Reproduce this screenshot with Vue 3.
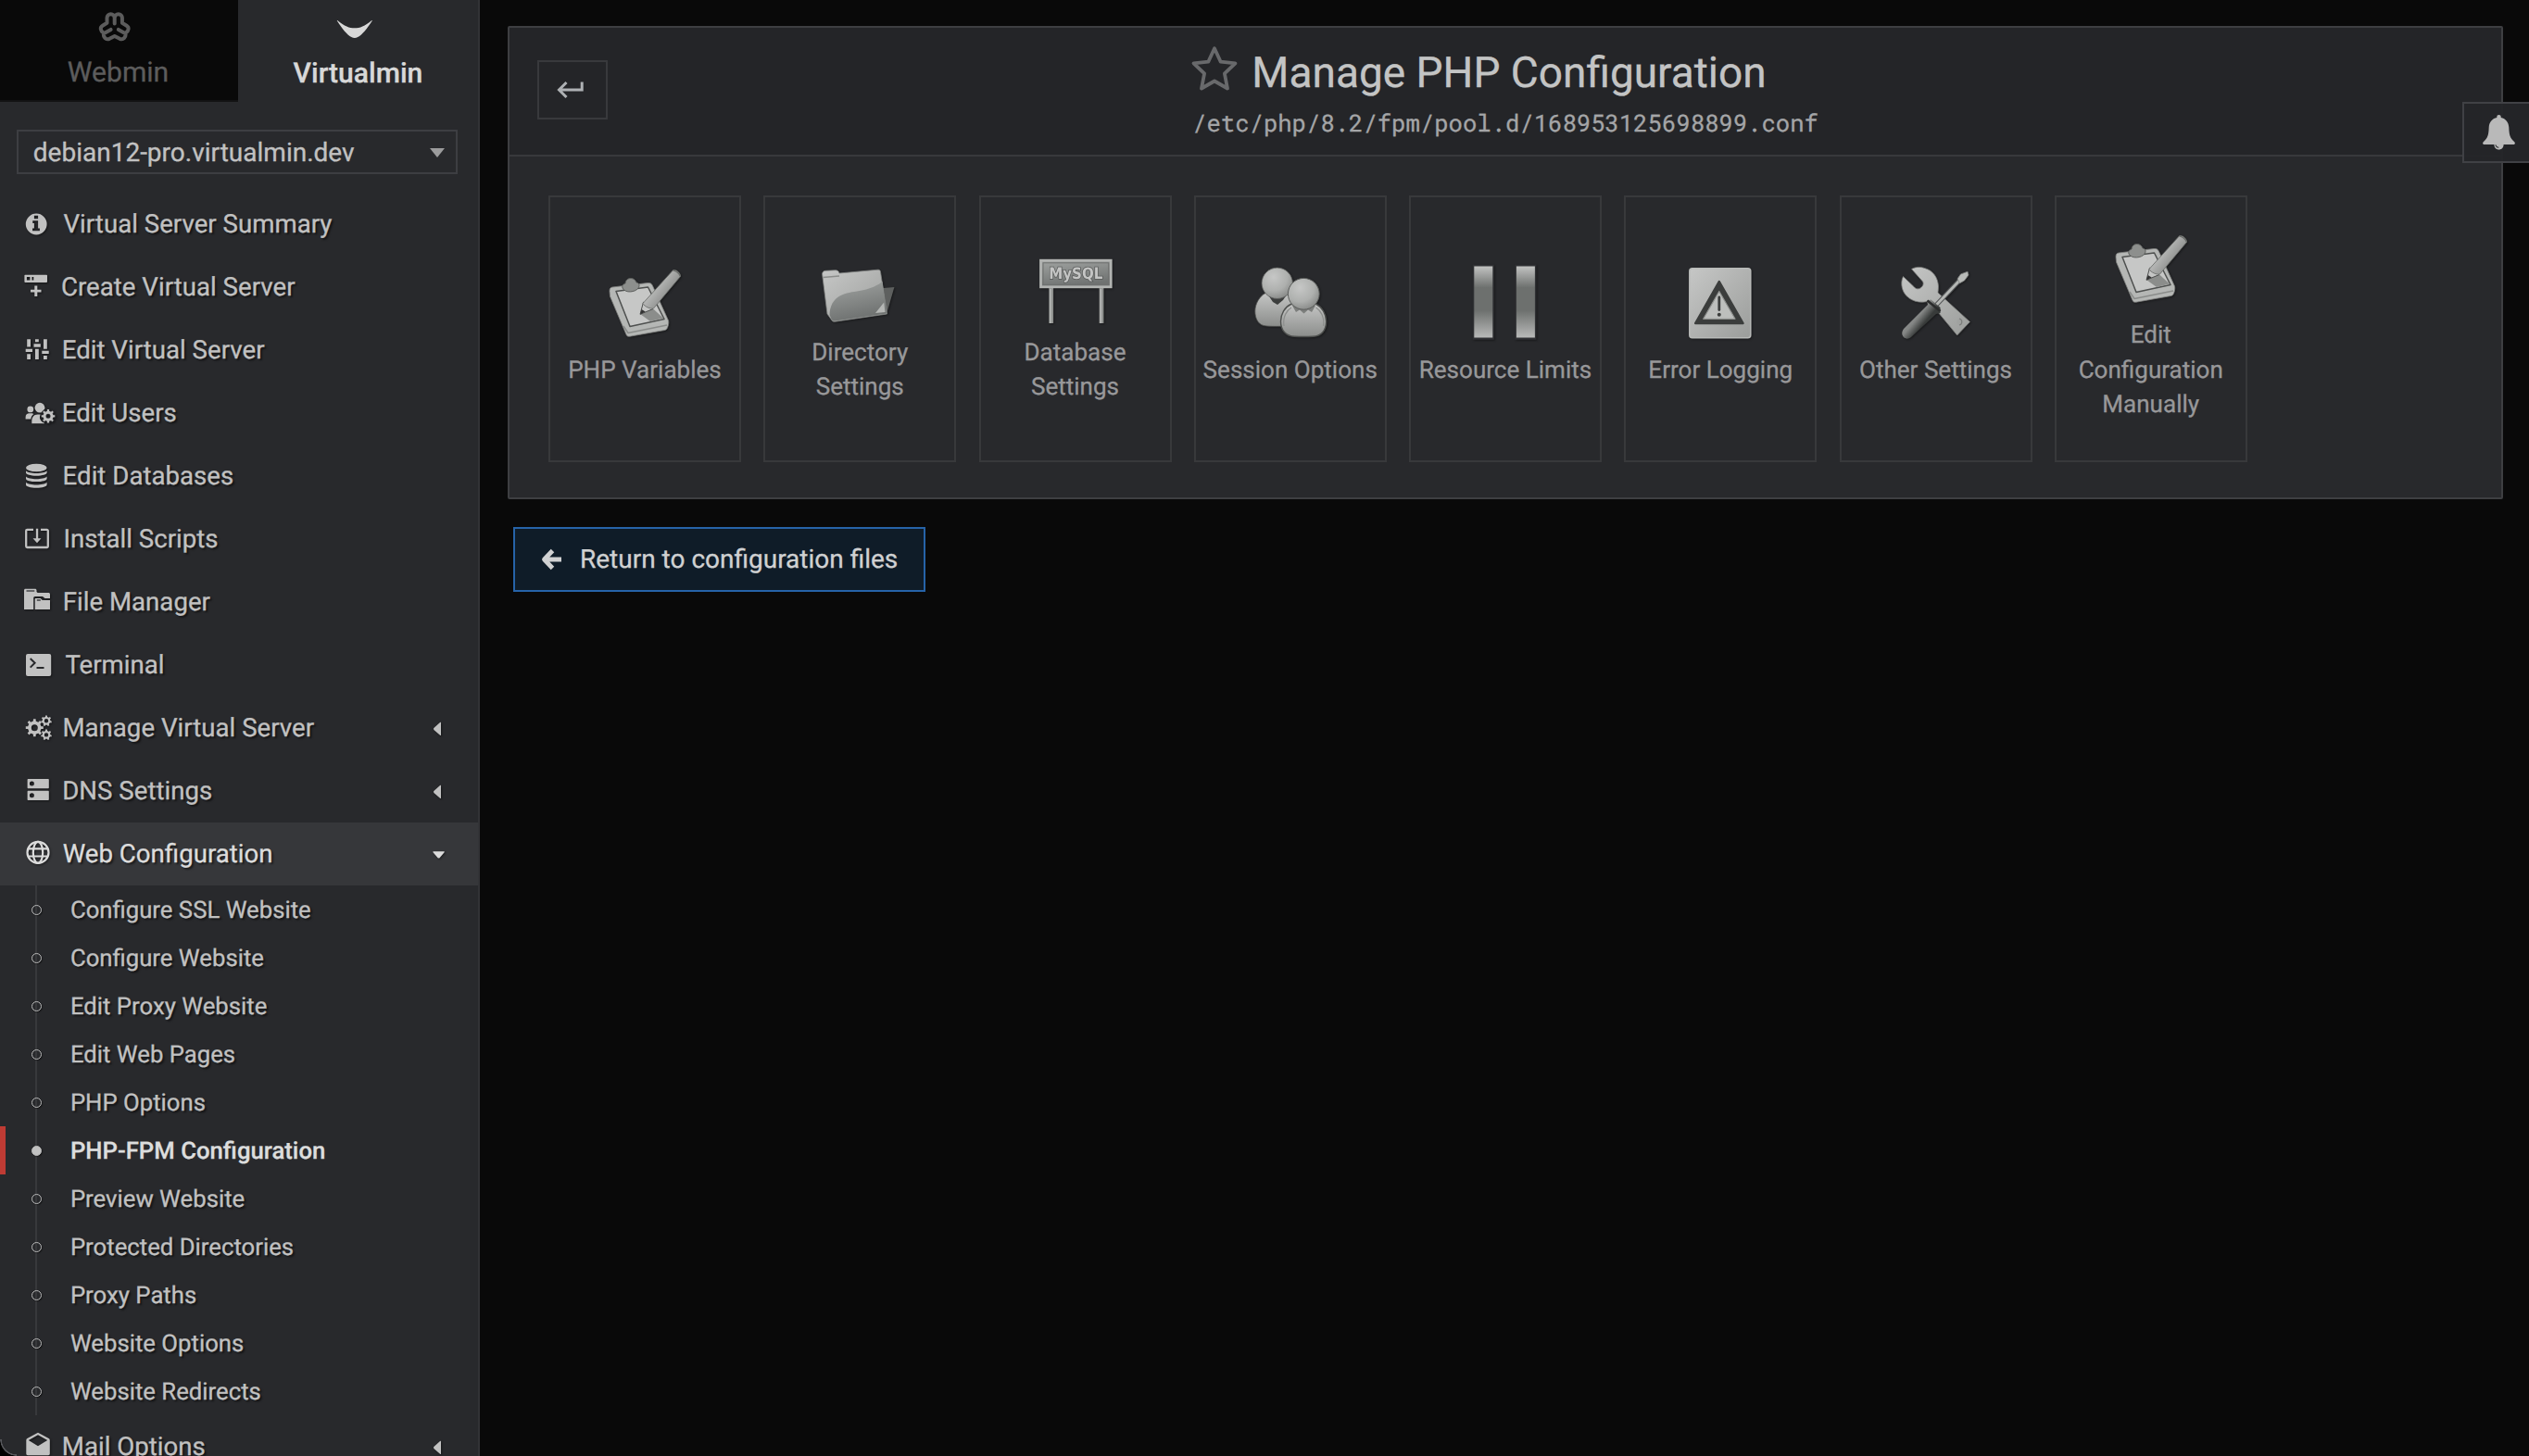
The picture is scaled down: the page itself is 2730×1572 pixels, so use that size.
<script setup>
const items = [
  { icon: 'info', label: 'Virtual Server Summary', gap: 4.5 },
  { icon: 'create', label: 'Create Virtual Server', gap: 2 },
  { icon: 'sliders', label: 'Edit Virtual Server', gap: 2.7 },
  { icon: 'users', label: 'Edit Users', gap: 2.7 },
  { icon: 'database', label: 'Edit Databases', gap: 3.6 },
  { icon: 'install', label: 'Install Scripts', gap: 4.4 },
  { icon: 'files', label: 'File Manager', gap: 3.7 },
  { icon: 'terminal', label: 'Terminal', gap: 6.4 },
  { icon: 'gears', label: 'Manage Virtual Server', gap: 3.4, caret: 'left' },
  { icon: 'dns', label: 'DNS Settings', gap: 3.2, caret: 'left' },
  {
    icon: 'globe', label: 'Web Configuration', gap: 3.7, caret: 'down', open: true,
    children: [
      'Configure SSL Website', 'Configure Website', 'Edit Proxy Website', 'Edit Web Pages',
      'PHP Options', 'PHP-FPM Configuration', 'Preview Website', 'Protected Directories',
      'Proxy Paths', 'Website Options', 'Website Redirects',
    ],
  },
  { icon: 'mail', label: 'Mail Options', gap: 2.8, caret: 'left' },
]
const activeChild = 'PHP-FPM Configuration'

const cards = [
  { art: 'clipboard', lines: ['PHP Variables'] },
  { art: 'folder', lines: ['Directory', 'Settings'] },
  { art: 'sign', lines: ['Database', 'Settings'] },
  { art: 'people', lines: ['Session Options'] },
  { art: 'bars', lines: ['Resource Limits'] },
  { art: 'warning', lines: ['Error Logging'] },
  { art: 'tools', lines: ['Other Settings'] },
  { art: 'clipboard', lines: ['Edit', 'Configuration', 'Manually'] },
]

// Outline of a cog with n teeth around (cx, cy)
function cog(cx, cy, r, n, hole) {
  const pts = []
  for (let i = 0; i < n; i++) {
    const a = (i * 2 * Math.PI) / n - Math.PI / 2
    const s = Math.PI / n
    for (const [d, k] of [[-0.95, 0.74], [-0.5, 0.76], [-0.36, 1], [0.36, 1], [0.5, 0.76]]) {
      pts.push(`${(cx + Math.cos(a + d * s) * r * k).toFixed(2)} ${(cy + Math.sin(a + d * s) * r * k).toFixed(2)}`)
    }
  }
  return `M${pts.join('L')}ZM${cx - hole} ${cy}a${hole} ${hole} 0 1 0 ${2 * hole} 0a${hole} ${hole} 0 1 0 ${-2 * hole} 0Z`
}
const gearSmall = cog(28, 23.3, 7.3, 8, 2.5)
const gearBig = cog(13.3, 19.7, 9.6, 8, 3.5)
const gearTop = cog(26, 12.3, 5.9, 7, 2.2)
const gearBottom = cog(26, 27.4, 5.9, 7, 2.2)
</script>

<template>
  <div class="page">
    <svg class="defs" width="0" height="0">
      <defs>
        <linearGradient id="lgA" x1="0" y1="0" x2="1" y2="1">
          <stop offset="0" stop-color="#c6c7c6" /><stop offset="1" stop-color="#9b9d9b" />
        </linearGradient>
        <linearGradient id="lgV" x1="0" y1="0" x2="0" y2="1">
          <stop offset="0" stop-color="#c4c5c4" /><stop offset="1" stop-color="#8b8d8b" />
        </linearGradient>
        <linearGradient id="lgDark" x1="0" y1="0" x2="0.3" y2="1">
          <stop offset="0" stop-color="#a1a4a2" /><stop offset="1" stop-color="#6f7271" />
        </linearGradient>
        <linearGradient id="lgPencil" x1="0" y1="0" x2="1" y2="0.8">
          <stop offset="0" stop-color="#8d8f8d" /><stop offset="0.35" stop-color="#c0c1c0" /><stop offset="1" stop-color="#6c6e6c" />
        </linearGradient>
        <linearGradient id="lgBar" x1="0" y1="0" x2="0" y2="1">
          <stop offset="0" stop-color="#c2c3c2" /><stop offset="0.3" stop-color="#6d706e" />
          <stop offset="0.62" stop-color="#6d706e" /><stop offset="1" stop-color="#b9bab9" />
        </linearGradient>
        <linearGradient id="lgHandle" gradientUnits="userSpaceOnUse" x1="26" y1="46" x2="38" y2="56">
          <stop offset="0" stop-color="#8e908f" /><stop offset="0.4" stop-color="#838584" /><stop offset="1" stop-color="#383b3a" />
        </linearGradient>
        <radialGradient id="rgHead" cx="0.38" cy="0.3" r="0.75">
          <stop offset="0" stop-color="#c6c7c6" /><stop offset="0.6" stop-color="#aeb0ae" /><stop offset="1" stop-color="#868886" />
        </radialGradient>
      </defs>
    </svg>

    <aside class="sidebar">
      <div class="tabs">
        <div class="tab webmin">
          <svg class="tab-icon" width="34" height="33" viewBox="0 0 34 33">
            <path d="M16.7 12.5V6.3a4.1 4.1 0 0 0-8.2 0v5.5L3.7 14.8c-3.1 1.9-2.2 5.5.8 7.6.2 5 2.6 8.2 6.7 6.4l5.5-2.8 5.5 2.8c4.1 1.8 6.5-1.4 6.7-6.4 3-2.1 3.9-5.7.8-7.6l-4.8-3V6.3a4.1 4.1 0 0 0-8.2 0M5 23.2l7.6-4.3M28.4 23.2l-7.6-4.3" fill="none" stroke="#5c5c5c" stroke-width="4" stroke-linecap="round" stroke-linejoin="round" />
          </svg>
          <span>Webmin</span>
        </div>
        <div class="tab virtualmin">
          <svg class="tab-icon" width="38" height="33" viewBox="0 0 38 33">
            <path d="M.3 9C8 15.5 13 17.3 18.8 17.3S29.500 15.500 37.300 9c.4-.3.700 0 .400.400C32.500 17.500 27 24.500 22.300 27c-2.300 1.200-4.700 1.200-7 0C10.600 24.500 5.100 17.500-.1 9.400c-.3-.4 0-.7.4-.4z" fill="#d8d8d8" />
          </svg>
          <span>Virtualmin</span>
        </div>
      </div>

      <div class="select">
        <span>debian12-pro.virtualmin.dev</span>
        <svg width="16" height="10" viewBox="0 0 16 10"><path d="M0 0h16L8 10z" fill="#9c9c9d" /></svg>
      </div>

      <nav class="menu">
        <template v-for="it in items" :key="it.label">
          <div class="row" :class="{ open: it.open }">
            <svg class="icon" width="40" height="40" viewBox="0 0 40 40" fill="currentColor">
              <path v-if="it.icon === 'info'" fill-rule="evenodd" d="M15.200 8.600a11.400 11.400 0 1 0 0 22.800a11.400 11.400 0 1 0 0-22.800zM12.900 10.800h4.200v3.500h-4.200zM11.300 16.300h5.800v8.200h1.800v2.700h-7.800v-2.700h1.800v-5.500h-1.600z" />
              <template v-else-if="it.icon === 'create'">
                <path fill-rule="evenodd" d="M3.200 6.700h23c.6 0 .8.300.8.900v6.500c0 .6-.3.900-.9.900H3.300c-.6 0-.9-.3-.9-.9V7.600c0-.6.200-.9.800-.900zM4.900 9v3.500h3.500V9zM10.500 9v3.500h1.800V9z" />
                <path d="M13.300 18.500h3v4.300h4.200v2.800h-4.200V30h-3v-4.400H9v-2.800h4.300z" />
              </template>
              <path v-else-if="it.icon === 'sliders'" d="M5.200 8.300h3.800V16.500H5.200zM3.700 18.700h7.300v3.300H3.700zM5.200 24.300h3.800v5.700H5.200zM14 8.300h3.800v3H14zM12.500 13.300h7.300v3.400h-7.300zM14 18.700h3.800V30H14zM23 8.300h3.800v10.400H23zM21.300 20.700h7.400v3.300h-7.400zM23 26h3.800v4H23z" />
              <template v-else-if="it.icon === 'users'">
                <circle cx="19" cy="14.200" r="5.400" /><circle cx="8.800" cy="15.900" r="3.400" />
                <path d="M3.600 26.500v-2c0-2.800 1.800-4.200 4-4.200h2.600c1 0 1.500.2 2.200.7-1.700 1.300-2.700 3-3.100 5.500z" />
                <path d="M10.300 31.300v-2.600c0-4.400 2.500-7.200 6.200-7.200h3.200a6.500 6.500 0 0 0 1 7.300c1 1.200 2.200 1.600 3.300 1.700v.8z" />
                <path :d="gearSmall" fill-rule="evenodd" stroke="#28292c" stroke-width="2" paint-order="stroke" />
              </template>
              <template v-else-if="it.icon === 'database'">
                <ellipse cx="15.300" cy="11" rx="11.300" ry="4.300" />
                <path d="M4 14.200c3.500 3.600 19 3.600 22.600 0v2.400c0 1.600-4.800 3.200-11.300 3.200S4 18.200 4 16.600zM4 20.500c3.500 3.600 19 3.600 22.600 0v2.400c0 1.600-4.800 3.200-11.300 3.200S4 24.500 4 22.900zM4 26.800c3.500 3.600 19 3.600 22.600 0v2.600c0 1.700-4.800 3.300-11.300 3.300S4 31.100 4 29.400z" />
              </template>
              <template v-else-if="it.icon === 'install'">
                <path d="M12 9.900H5.400a1.200 1.200 0 0 0-1.200 1.200v16.700a1.200 1.200 0 0 0 1.200 1.200h21.200a1.200 1.200 0 0 0 1.200-1.200V11.100a1.200 1.200 0 0 0-1.200-1.200H20" fill="none" stroke="currentColor" stroke-width="2.300" />
                <path d="M14.900 8.700h2.300v10.500h3.300L16 24.300l-4.500-5.100h3.400z" />
              </template>
              <template v-else-if="it.icon === 'files'">
                <path d="M2 28V7.200C2 6.300 2.600 5.700 3.500 5.700h10.300c1 0 1.700.6 1.700 1.600v1.800l1.200.8h11.600c1 0 1.700.6 1.700 1.600V16h-5.500l-2.500-2h-8c-1.200 0-1.800.7-1.800 1.800V28z" />
                <path d="M4.500 8h8.800" stroke="#28292c" stroke-width="1.200" />
                <path d="M13.700 28V17c0-.7.400-1.100 1-1.100h5l2 2H30V28z" /><path d="M15.800 18h4" stroke="#28292c" stroke-width="1.300" />
              </template>
              <template v-else-if="it.icon === 'terminal'">
                <rect x="4" y="8" width="27.200" height="24" rx="2" />
                <path d="M8.700 13l4.900 4.800-4.900 4.800M15.500 23h8" fill="none" stroke="#28292c" stroke-width="2" />
              </template>
              <path v-else-if="it.icon === 'gears'" fill-rule="evenodd" :d="gearBig + gearTop + gearBottom" />
              <path v-else-if="it.icon === 'dns'" fill-rule="evenodd" d="M6.700 7h21c.8 0 1.100.3 1.100 1.100v8.100c0 .8-.3 1.100-1.100 1.100h-21c-.8 0-1.100-.3-1.100-1.100V8.100c0-.8.300-1.100 1.100-1.100zM10.400 9.500a2.500 2.500 0 1 0 0 5a2.500 2.500 0 1 0 0-5zM6.700 19.700h21c.8 0 1.100.3 1.100 1.100v8.100c0 .8-.3 1.100-1.100 1.100h-21c-.8 0-1.100-.3-1.100-1.100v-8.100c0-.8.300-1.100 1.100-1.100zM10.400 22.200a2.500 2.500 0 1 0 0 5a2.500 2.500 0 1 0 0-5z" />
              <g v-else-if="it.icon === 'globe'" fill="none" stroke="currentColor" stroke-width="2.200">
                <circle cx="17" cy="18.400" r="11.500" /><ellipse cx="17" cy="18.400" rx="5.200" ry="11.500" />
                <path d="M6.500 14.300h21M6.500 22.500h21" />
              </g>
              <path v-else fill-rule="evenodd" d="M17 4.700l11.700 6.400c.7.500 1.100 1 1.100 1.800v14.600c0 1-.7 1.700-1.700 1.700H6c-1 0-1.700-.7-1.700-1.700V12.900c0-.8.400-1.300 1.100-1.800zM17 7.200L6.800 12.900 17 19.300l10.200-6.400z" />
            </svg>
            <span class="label" :style="{ marginLeft: it.gap + 'px' }">{{ it.label }}</span>
            <svg v-if="it.caret === 'left'" class="caret" width="16" height="16" viewBox="0 0 16 16"><path d="M10 1.400v13c0 .6-.5.700-1 .3L2.600 9.200c-.8-.7-.8-1.600 0-2.400L9 1.100c.5-.4 1-.3 1 .3z" fill="currentColor" /></svg>
            <svg v-else-if="it.caret" class="caret" width="16" height="16" viewBox="0 0 16 16"><path d="M2 4.200h11.200c.7 0 .9.500.4 1L8.800 11c-.7.800-1.700.8-2.400 0L1.500 5.200c-.5-.5-.2-1 .5-1z" fill="currentColor" /></svg>
          </div>
          <div v-if="it.children" class="children">
            <div v-for="c in it.children" :key="c" class="child" :class="{ active: c === activeChild }">
              <i class="dot"></i><span>{{ c }}</span>
            </div>
          </div>
        </template>
      </nav>
    </aside>

    <main class="main">
      <section class="panel">
        <header class="head">
          <div class="back">
            <svg width="30" height="20" viewBox="0 0 30 20"><path d="M27.200 1.500V10H3M10.500 2L2.500 10l8 8" fill="none" stroke="#aeb1b4" stroke-width="3" /></svg>
          </div>
          <div class="titles">
            <h1>
              <svg width="54" height="52" viewBox="0 0 54 52"><path d="M27 4.200l6.700 14.500 15.800 1.700-11.600 11 3.100 16.100L27 39.500l-14 8 3.100-16.100-11.600-11 15.800-1.700z" fill="none" stroke="#68696b" stroke-width="3.800" stroke-linejoin="round" /></svg>
              <span>Manage PHP Configuration</span>
            </h1>
            <p>/etc/php/8.2/fpm/pool.d/168953125698899.conf</p>
          </div>
        </header>
        <div class="cards">
          <div v-for="(c, i) in cards" :key="i" class="card">
            <svg class="art" width="100" height="88" viewBox="0 0 100 88">
              <g v-if="c.art === 'clipboard'" stroke-linejoin="round">
                <path d="M12 22.500c0-2.500.5-4 3-4.500l38-4.500c3-.300 4.500.500 5.500 3L75.500 54c.5 1.500.300 4-.500 6.500s-1.500 3.500-3.500 4L34 71.200c-2 .3-3.300-.200-4-2L12.500 28z" fill="#b5b7b5" stroke="#7d7f7d" stroke-width=".8" />
                <path d="M27 60l5 7.500 42-8.500" fill="none" stroke="#8a8c8a" stroke-width="1.500" />
                <path d="M19 22.500l34.500-4.500 17.500 34.500-37 8z" fill="#c6c7c6" stroke="#4e504f" stroke-width="1.500" />
                <path d="M45 47l12-7.500L70 51.500l-14 3.500z" fill="#8b8d8b" />
                <path d="M26 19c-1-4 1.500-4 3-5 .5-4 3-5.500 6-5.500s5 2 6 4.500c3 .5 4 3 2 6-3 4.500-14 6-17 0z" fill="#8d8f8d" stroke="#5d5f5d" stroke-width="1" />
                <path d="M45 47.300l3.500-13L59 41.500z" fill="#c4c5c4" stroke="#4b4d4c" stroke-width="1" />
                <path d="M45 47.500l1.600-5.500 4 2.500z" fill="#333" />
                <path d="M48 35.500L80.500-.3c3-1.500 8.500 3.300 8 6.800L59.500 41c-3 1-10-2-11.500-5.500z" fill="url(#lgPencil)" stroke="#666866" stroke-width=".8" />
                <path d="M80.500 0c3 .5 6.500 3.300 8 6.500" fill="none" stroke="#666866" stroke-width="1.200" />
              </g>
              <g v-else-if="c.art === 'folder'" stroke-linejoin="round">
                <path d="M70 37.500l17.400-1.500L79 65l-13 1z" fill="#5e605f" />
                <path d="M9.500 21.500c.5-2 1.500-3 3.500-3.200l11-.6c2 0 3.500 1 4 3.300l41.500-3.800c1.800 0 2.800.5 3 2.300L79.500 65l-56 8.200c-2 .2-3.200-.5-4-2L15 65z" fill="url(#lgA)" stroke="#7f8180" stroke-width=".8" />
                <path d="M28 24l-17.500 1.500" stroke="#8b8d8b" stroke-width="1.300" fill="none" />
                <path d="M17.500 66C18.500 46 32 42.500 47 40.500S71 33 74.500 30L79 64.500l-55.500 8c-2 .3-3.500-.5-4-2z" fill="url(#lgDark)" />
                <path d="M67 64l9.200-11.500L77.500 63z" fill="#b5b7b5" />
              </g>
              <g v-else-if="c.art === 'sign'">
                <rect x="21.300" y="36" width="4.800" height="39" fill="#8f918f" /><rect x="75.600" y="36" width="4.800" height="39" fill="#8f918f" />
                <path d="M23 38v37M77.300 38v37" stroke="#b5b7b5" stroke-width="1.600" />
                <rect x="12.500" y="7.200" width="75.700" height="28.600" fill="url(#lgDark)" stroke="#b2b4b2" stroke-width="2.800" />
                <rect x="15" y="9.800" width="70.700" height="23.600" fill="none" stroke="#6e706f" stroke-width="1" />
                <text x="50.300" y="26.500" text-anchor="middle" textLength="58" lengthAdjust="spacingAndGlyphs" class="sign-text">MySQL</text>
              </g>
              <g v-else-if="c.art === 'people'">
                <path d="M11.800 44c0-8 5-16.500 11.200-19.500h24C54 28 57 36 57 43c0 10-6 17-14 17.200-8 .3-17 .3-22-.7-6-1.500-9.200-8-9.200-15.500z" fill="url(#lgV)" stroke="#4f514f" stroke-width=".8" />
                <path d="M25 25l6 9 5 3 6-5 4-6-10 3z" fill="#3c3e3d" />
                <circle cx="35.700" cy="13.800" r="16.700" fill="url(#rgHead)" stroke="#5a5c5a" stroke-width=".8" />
                <path d="M39.500 55c0-8 4.500-15.500 11-18.500h27.500c6 3 10.600 10.500 10.600 18.500 0 10-5.500 16-14 16.300-7 .3-14.500.3-20.500 0-8.500-.3-14.600-6.300-14.600-16.300z" fill="url(#lgV)" stroke="#4f514f" stroke-width="1.400" />
                <path d="M43 60c-1.500-10 3-17 8-20M85.500 60c1.500-10-3-17-8-20" fill="none" stroke="#8b8d8b" stroke-width="1.200" />
                <path d="M52 38l4 7 4-2.500 4.500 4 4.500-4 4 2.500 4-7z" fill="#7c7e7c" />
                <circle cx="64.300" cy="25.300" r="16.900" fill="url(#rgHead)" stroke="#5a5c5a" stroke-width="1" />
              </g>
              <g v-else-if="c.art === 'bars'">
                <path d="M14.800-6.200h23v81h-23zM60.400-6.200h23v81h-23z" fill="#303134" />
                <rect x="16.300" y="-4.500" width="20" height="77" fill="url(#lgBar)" /><rect x="61.900" y="-4.500" width="20" height="77" fill="url(#lgBar)" />
              </g>
              <g v-else-if="c.art === 'warning'" stroke-linejoin="round">
                <rect x="16.800" y="-2.300" width="66" height="75" rx="3" fill="url(#lgA)" stroke="#b9bbb9" stroke-width="1.500" />
                <path d="M48.800 12L74.500 57H23.200z" fill="#3b3d3c" stroke="#3b3d3c" stroke-width="2.500" />
                <path d="M48.800 22.500L66 52.300H31.700z" fill="#bdbfbd" stroke="#8f918f" stroke-width="1.200" />
                <path d="M48.800 29v13.500" stroke="#3b3d3c" stroke-width="2.800" stroke-linecap="round" /><circle cx="48.800" cy="47.800" r="2" fill="#3b3d3c" />
              </g>
              <g v-else stroke-linejoin="round">
                <path d="M23.500-1.500c4-2.500 9.500-2.700 14-1C47 0 52 8 52.500 17c0 3-.3 5-.5 7L86.500 55.500 72.700 70 47 39l-6-5.500c-13 3-25-3.500-27.700-14.500-1-4.500-.8-9 1.200-12.500L26 17.500c2 2.500 4.500 3 7 1.500s4-4.500 2.500-7z" fill="url(#lgA)" stroke="#777977" stroke-width=".8" />
                <circle cx="76" cy="55.500" r="3.600" fill="#a0a2a0" /><path d="M75 52a3.600 3.600 0 0 1 0 7" stroke="#7b7d7b" stroke-width="1.200" fill="none" />
                <path d="M50 37.500L76 10" stroke="#57595a" stroke-width="5" /><path d="M50 37.500L76 10" stroke="#b5b7b5" stroke-width="2.800" />
                <path d="M73 9l3.500-5L84 1.200 85 5l-4.500 6-5 2.800z" fill="#b9bbb9" stroke="#7e807e" stroke-width=".8" />
                <path d="M40 32.500l4.500-1L54.500 40v6l-4.500 1L23 72c-3 2.500-6.500 2-8.500-.5s-1.500-5.500.5-8.500l26-26z" fill="url(#lgHandle)" />
                <path d="M40.500 32.500l14 11.500" stroke="#2b2c2c" stroke-width="2.500" />
              </g>
            </svg>
            <div class="caption"><span v-for="l in c.lines" :key="l">{{ l }}</span></div>
          </div>
        </div>
      </section>
      <div class="return">
        <svg width="24" height="24" viewBox="0 0 24 24"><path d="M22 12H4M12.500 2.500L3.500 12l9 9.500" fill="none" stroke="#d0d1d2" stroke-width="4.800" stroke-linejoin="round" /></svg>
        <span>Return to configuration files</span>
      </div>
    </main>

    <div class="bell">
      <svg width="36" height="40" viewBox="0 0 36 40"><path fill-rule="evenodd" d="M17.500 1c1.300 0 2.200.9 2.200 2.200v.7c5.300 1.100 8.400 5.200 8.600 10.600.3 7.500 1 11.500 5.500 15.200 1 .9 1.300 1.500 1 2.300-.2.700-.8 1-1.600 1H22.600c0 3.300-2.100 5.500-5.100 5.500s-5.100-2.200-5.100-5.500H1.800c-.8 0-1.400-.3-1.600-1-.3-.8 0-1.400 1-2.300 4.500-3.700 5.200-7.700 5.500-15.200.2-5.400 3.300-9.500 8.600-10.600v-.7C15.300 1.900 16.200 1 17.500 1zM13.500 33.200c.2 2 1.700 3.400 3.800 3.500v-.9c-1.600-.1-2.700-1.100-2.900-2.600z" fill="#b9b9b9" /></svg>
    </div>
    <div class="corner"></div>
  </div>
</template>

<style>
body { margin: 0; background: #090909; overflow: hidden; }
</style>

<style scoped>
.page {
  position: relative;
  display: flex;
  width: 2730px;
  height: 1572px;
  overflow: hidden;
  background: #090909;
  font-family: Roboto, "Liberation Sans", sans-serif;
  text-rendering: geometricPrecision;
  -webkit-text-stroke: .3px currentColor;
}
.defs { position: absolute; }
svg { display: block; flex: none; overflow: visible; }

.sidebar {
  box-sizing: border-box;
  flex: none;
  width: 518px;
  height: 1572px;
  overflow: hidden;
  background: #28292c;
  border-right: 2px solid #323336;
}
.tabs { display: flex; height: 110px; }
.tab {
  box-sizing: border-box;
  display: flex;
  flex-direction: column;
  align-items: center;
  padding-top: 13px;
  font-size: 30.100px;
  line-height: 36px;
}
.tab span { margin-top: 15px; }
.webmin { width: 257px; background: #090909; border-bottom: 2px solid #131314; color: #5c5c5c; }
.webmin .tab-icon { margin-right: 9px; }
.webmin span { margin-right: 2px; }
.virtualmin { width: 259px; color: #d8d8d8; font-weight: 500; }
.virtualmin .tab-icon { margin-right: 8px; }
.virtualmin span { margin-top: 16px; }

.select {
  box-sizing: border-box;
  display: flex;
  align-items: center;
  justify-content: space-between;
  width: 476px;
  height: 48px;
  margin: 30px 0 0 18px;
  padding: 0 12px 0 15.800px;
  border: 2px solid #3d3e42;
  color: #c1c1c1;
  font-size: 28px;
  line-height: 44px;
}
.select span { margin-top: 1px; }
.select svg { margin-top: 2px; }

.menu {
  margin-top: 20px;
  color: #c1c1c1;
  font-size: 27.650px;
  text-shadow: 2px 2px 2px rgba(0, 0, 0, .55);
}
.row { display: flex; align-items: center; height: 68px; padding: 0 34px 0 24px; }
.row.open { background: #36373a; color: #dcdcdc; }
.icon, .caret { filter: drop-shadow(1px 1px 1px rgba(0, 0, 0, .5)); }
.label { flex: 1; line-height: 66px; margin-top: -1px; white-space: nowrap; }
.caret { margin-top: 2px; }

.children {
  background: linear-gradient(#38393c, #38393c) 38px 0 / 2px 100% no-repeat;
  font-size: 25.720px;
}
.child { box-sizing: border-box; display: flex; align-items: center; height: 52px; line-height: 52px; padding-left: 33.500px; }
.child span { margin: 2px 0 0 31.400px; }
.dot { box-sizing: border-box; width: 11px; height: 11px; border: 1.500px solid #b9b9b9; border-radius: 50%; box-shadow: 1px 1px 1px rgba(0, 0, 0, .4); }
.child.active { padding-left: 27.500px; border-left: 6px solid #bf3b34; color: #dcdddd; font-weight: 500; text-shadow: none; }
.active .dot { background: #c1c1c1; }

.main { flex: 1; padding: 28px 28px 0 30px; }
.panel { box-sizing: border-box; height: 511px; border: 2px solid #3e3f42; border-radius: 2px; background: #28292c; }
.head {
  box-sizing: border-box;
  display: flex;
  height: 139px;
  background: #242528;
  border-bottom: 2px solid #38393c;
}
.back {
  box-sizing: border-box;
  display: flex;
  align-items: center;
  justify-content: center;
  width: 76px;
  height: 64px;
  margin: 35px 0 0 30px;
  padding-right: 4px;
  border: 2px solid #38393c;
}
.titles { flex: 1; margin-right: 106px; display: flex; flex-direction: column; align-items: center; }
h1 {
  display: flex;
  margin: 18px 59px 0 0;
  color: #c3c4c4;
  font-size: 46px;
  font-weight: 400;
  line-height: 56px;
}
h1 svg { margin-right: 13px; }
h1 span { margin-top: 3px; }
p { margin: 7px 0 0; color: #a4a5a7; font: 25.600px/36px "Roboto Mono", "Liberation Mono", monospace; }

.cards { display: flex; gap: 24.250px; padding: 42px; }
.card {
  box-sizing: border-box;
  display: flex;
  flex-direction: column;
  align-items: center;
  justify-content: center;
  width: 208px;
  height: 288px;
  border: 2px solid #38393b;
}
.art { filter: drop-shadow(1px 1px 1px rgba(0, 0, 0, .4)); }
.sign-text { font: bold 17px "DejaVu Sans", sans-serif; fill: #c4c5c4; stroke: #565857; stroke-width: 1.500px; paint-order: stroke; }
.caption {
  display: flex;
  flex-direction: column;
  align-items: center;
  margin: 1.200px 0 -1.200px;
  color: #98989a;
  font-size: 26.050px;
  line-height: 37.300px;
  white-space: nowrap;
}

.return {
  box-sizing: border-box;
  display: flex;
  align-items: center;
  width: 445px;
  height: 70px;
  margin: 30px 0 0 6px;
  padding-left: 28px;
  border: 2px solid #2663a8;
  background: #0f1c28;
  color: #d0d1d2;
  font-size: 28px;
}
.return svg { margin-top: -1px; }
.return span { margin: -2px 0 0 18px; }

.bell {
  position: absolute;
  top: 110px;
  right: 0;
  box-sizing: border-box;
  width: 72px;
  height: 66px;
  padding: 11px 0 0 20px;
  border: 2px solid #404145;
  border-right: 0;
  background: rgba(36, 37, 41, .96);
}
/* Rounded lower-left edge of the window */
.corner {
  position: absolute;
  left: 0;
  bottom: 0;
  width: 18px;
  height: 18px;
  background: radial-gradient(circle at 18px 0, transparent 16px, #55565a 16.500px, #55565a 17.500px, #000 18px);
}
</style>
